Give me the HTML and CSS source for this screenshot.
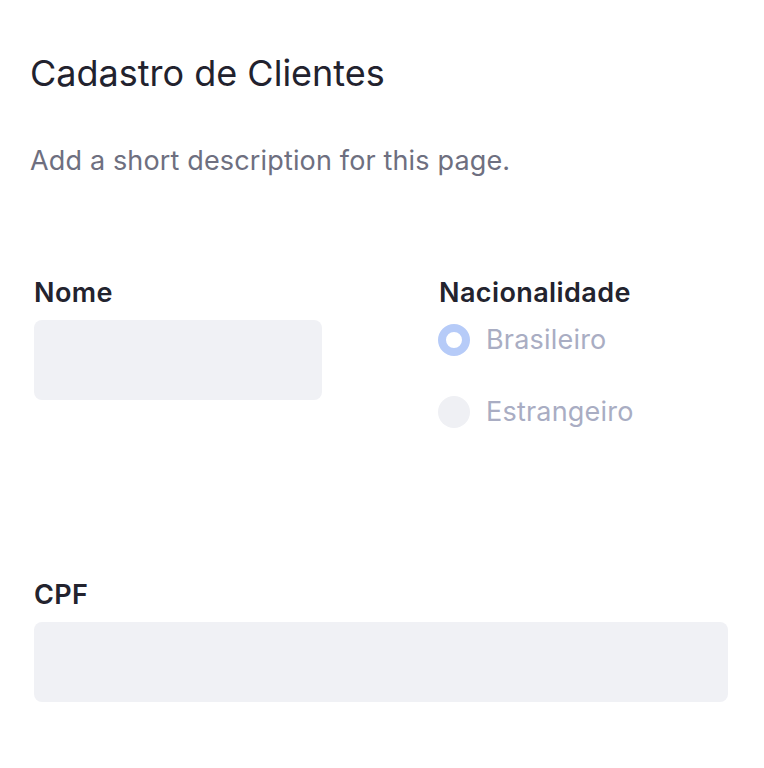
FILE: index.html
```html
<!DOCTYPE html>
<html lang="pt">
<head>
<meta charset="utf-8">
<title>Cadastro de Clientes</title>
<link rel="stylesheet" href="styles.css">
</head>
<body>
<div class="page">
  <header class="head">
    <h1 class="title">Cadastro de Clientes</h1>
    <p class="desc">Add a short description for this page.</p>
  </header>
  <form class="form">
    <div class="row">
      <div class="field">
        <label class="label">Nome</label>
        <div class="input"></div>
      </div>
      <div class="field">
        <label class="label">Nacionalidade</label>
        <div class="radios">
          <div class="radio-item"><span class="radio checked"></span><span class="radio-text">Brasileiro</span></div>
          <div class="radio-item"><span class="radio"></span><span class="radio-text">Estrangeiro</span></div>
        </div>
      </div>
    </div>
    <div class="field field-cpf">
      <label class="label">CPF</label>
      <div class="input"></div>
    </div>
  </form>
</div>
</body>
</html>
```

FILE: styles.css
```css
* { box-sizing: border-box; }
html, body { margin: 0; padding: 0; background: #fff; }
body { font-family: Inter, "Noto Sans", sans-serif; }
.page { padding: 51px 36px 0 30px; }
.title { margin: 0; font-size: 36px; line-height: 44px; font-weight: 400; color: #22222e; }
.desc { margin: 48px 0 0 0; font-size: 27px; line-height: 36px; color: #6e6f80; font-weight: 400; letter-spacing: 0.15px; }
.form { padding: 0 0 0 4px; margin-top: 98px; }
.row { display: grid; grid-template-columns: 288px 1fr; column-gap: 117px; align-items: start; }
.field { display: flex; flex-direction: column; }
.label { font-size: 27px; line-height: 32px; font-weight: 600; color: #23232e; letter-spacing: 0.4px; }
.input { height: 80px; background: #f0f1f5; border-radius: 8px; margin-top: 11px; }
.radios { display: flex; flex-direction: column; gap: 40px; margin-top: 15px; margin-left: -1px; }
.radio-item { display: flex; align-items: center; gap: 16px; height: 32px; }
.radio { width: 32px; height: 32px; border-radius: 50%; background: #eff0f4; flex: none; }
.radio.checked { background: #fff; border: 8px solid #b6cbf8; }
.radio-text { font-size: 27px; color: #a9adc3; line-height: 32px; letter-spacing: 0.2px; }
.field-cpf { margin-top: 151px; }
```
